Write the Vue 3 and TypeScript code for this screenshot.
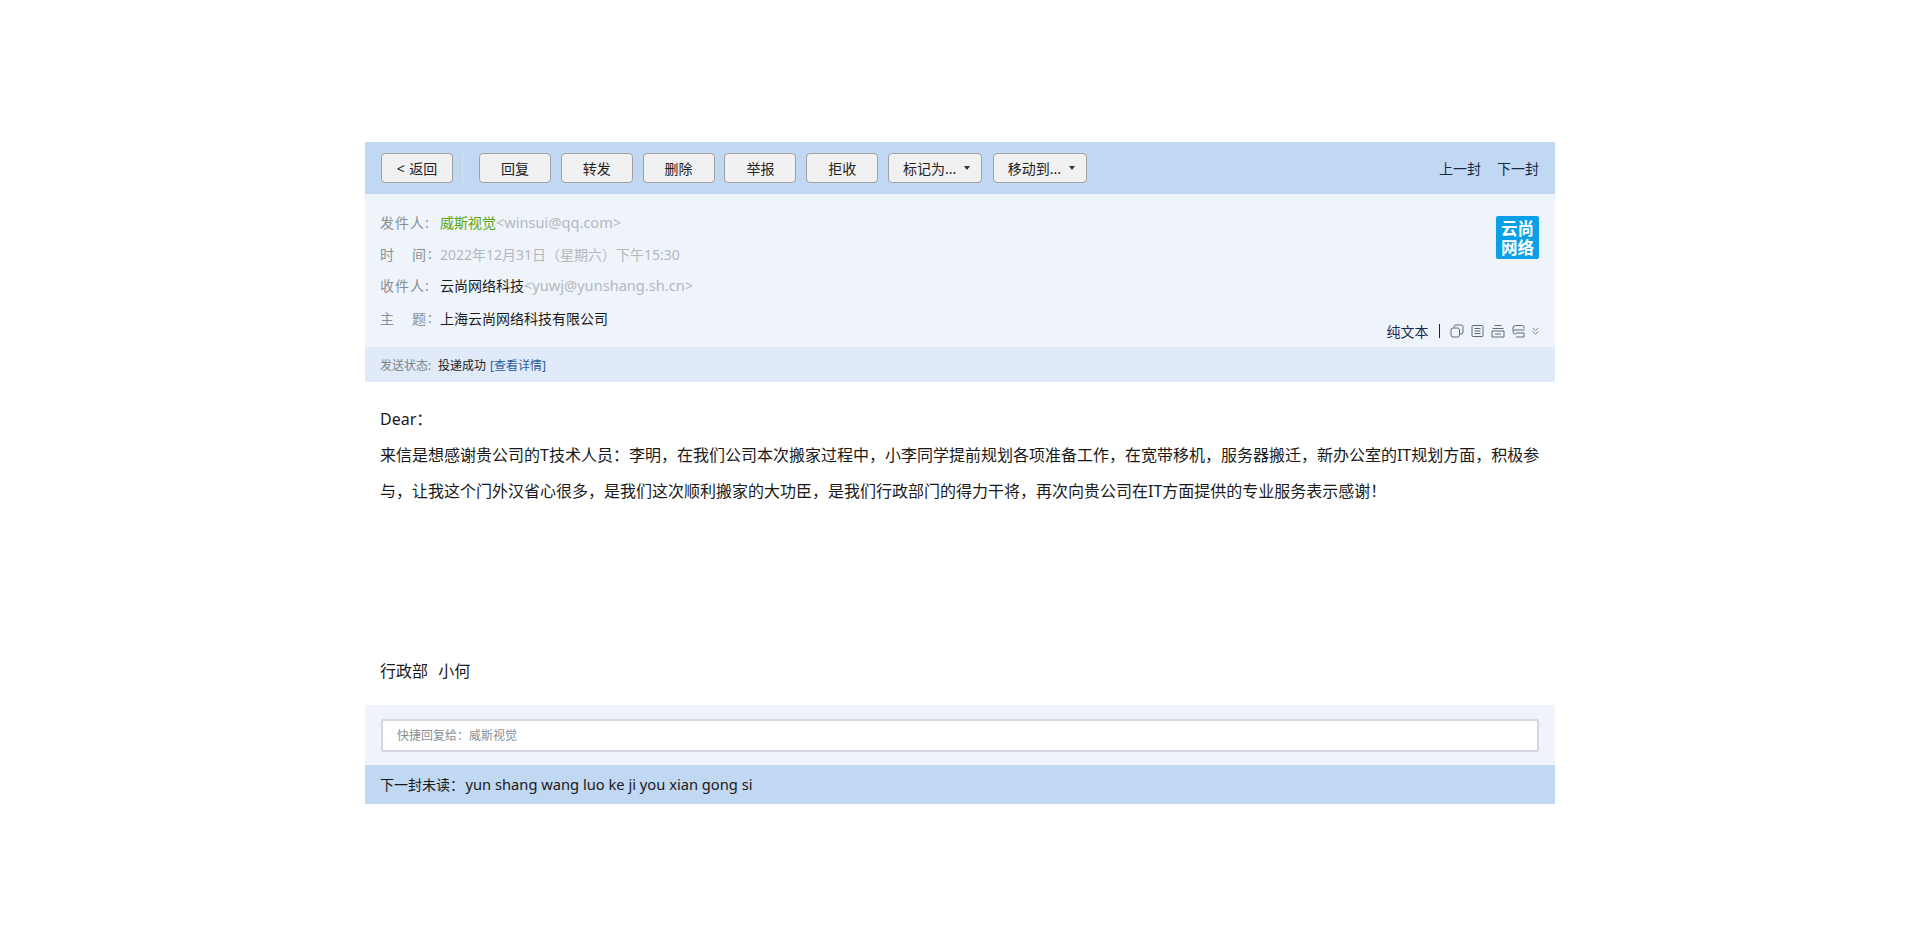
<template>
  <div class="page">
    <div class="mail">
      <div class="toolbar">
        <button class="btn">&lt; 返回</button>
        <span class="sep"></span>
        <div class="group">
          <button v-for="b in actions" :key="b" class="btn">{{ b }}</button>
          <button v-for="m in menus" :key="m" class="btn menu">
            {{ m }}<i class="caret"></i>
          </button>
        </div>
        <div class="pager">
          <a>上一封</a>
          <a>下一封</a>
        </div>
      </div>

      <div class="head">
        <div class="rows">
          <div class="row">
            <span class="label">发件人:</span>
            <span class="sender">威斯视觉</span><span class="addr latin">&lt;winsui@qq.com&gt;</span>
          </div>
          <div class="row">
            <span class="label spread"><b>时</b><b>间</b>:</span>
            <span class="addr">2022年12月31日（星期六）下午15:30</span>
          </div>
          <div class="row">
            <span class="label">收件人:</span>
            <span class="value">云尚网络科技</span><span class="addr latin">&lt;yuwj@yunshang.sh.cn&gt;</span>
          </div>
          <div class="row subject">
            <span class="label spread"><b>主</b><b>题</b>:</span>
            <span class="value">上海云尚网络科技有限公司</span>
          </div>
        </div>
        <div class="aside">
          <div class="logo">云尚<br />网络</div>
          <div class="tools">
            <span>纯文本</span>
            <i class="bar"></i>
            <svg width="14" height="14" viewBox="0 0 14 14" fill="none" stroke="#5f6b7a">
              <rect x="1" y="4" width="8.500" height="9" rx="2" />
              <path d="M4 3.500V3a2 2 0 0 1 2-2h5.500A1.500 1.500 0 0 1 13 2.500V8a2 2 0 0 1-2 2h-1" />
            </svg>
            <svg width="13" height="14" viewBox="0 0 13 14" fill="none" stroke="#5f6b7a">
              <rect x="1" y="1.500" width="11" height="11" rx="1" />
              <path d="M3.500 4.500h6M3.500 7h6M3.500 9.500h6" />
            </svg>
            <svg width="14" height="14" viewBox="0 0 14 14" fill="none" stroke="#5f6b7a">
              <path d="M3.500 1.500h7M1.500 4.500h11M1 7h12v6H1zM4 10h6" />
            </svg>
            <svg width="13" height="14" viewBox="0 0 13 14" fill="none" stroke="#5f6b7a">
              <path d="M12 4.500V3a1.500 1.500 0 0 0-1.500-1.500h-7A2.500 2.500 0 0 0 1 4v3.500A2.500 2.500 0 0 0 3.500 10H4M1.500 6h11M4 9h8v4H4" />
            </svg>
            <svg width="7" height="8" viewBox="0 0 7 8" fill="none" stroke="#7f8a97">
              <path d="M.5 1l3 2.500 3-2.500M.5 4.500l3 2.500 3-2.500" />
            </svg>
          </div>
        </div>
      </div>

      <div class="status">
        <span class="status-label">发送状态:</span>
        <span class="status-value">投递成功</span>
        <a class="detail">[查看详情]</a>
      </div>

      <div class="body">
        <p class="dear">Dear：</p>
        <p class="text">来信是想感谢贵公司的T技术人员：李明，在我们公司本次搬家过程中，小李同学提前规划各项准备工作，在宽带移机，服务器搬迁，新办公室的IT规划方面，积极参与，让我这个门外汉省心很多，是我们这次顺利搬家的大功臣，是我们行政部门的得力干将，再次向贵公司在IT方面提供的专业服务表示感谢！</p>
        <p class="sign">行政部&nbsp;&nbsp;小何</p>
      </div>

      <div class="reply">
        <div class="reply-box">快捷回复给：威斯视觉</div>
      </div>
      <div class="next">下一封未读：<span class="latin next-name">yun shang wang luo ke ji you xian gong si</span></div>
    </div>
  </div>
</template>

<script setup lang="ts">
const actions: string[] = ['回复', '转发', '删除', '举报', '拒收']
const menus: string[] = ['标记为...', '移动到...']
</script>

<style>
html,
body {
  margin: 0;
  background: #fff;
}
</style>

<style scoped>
.page {
  min-height: 944px;
  padding-top: 142px;
  box-sizing: border-box;
  font-family: "Noto Sans", "Noto Sans CJK SC", sans-serif;
  color: #000;
}

.mail {
  width: 1190px;
  margin: 0 auto;
}

.latin {
  font-size: 14.600px;
}

.toolbar {
  display: flex;
  align-items: center;
  height: 52px;
  padding: 0 16px;
  background: #c1d8f2;
}

.btn {
  width: 72px;
  height: 30px;
  padding: 0;
  border: 1px solid #a0a0a0;
  border-radius: 4px;
  background: #f1f1f1;
  font: inherit;
  font-size: 14px;
  word-spacing: 1px;
  color: #222;
}

.menu {
  width: 94px;
  padding-left: 14px;
  display: flex;
  align-items: center;
}

.menu + .menu {
  margin-left: 1px;
}

.caret {
  margin-left: 8px;
  border: 3px solid transparent;
  border-top: 4px solid #333;
  border-bottom: 0;
}

.sep {
  width: 1px;
  height: 30px;
  margin: 0 16px 0 9px;
  background: #d6e4f4;
}

.group {
  display: flex;
  gap: 9.800px;
}

.pager {
  display: flex;
  gap: 16px;
  margin-left: auto;
  font-size: 14px;
  color: #1a2a44;
}

.head {
  display: flex;
  justify-content: space-between;
  height: 153px;
  padding: 0 16px 0 15px;
  box-sizing: border-box;
  background: #eff4fb;
}

.rows {
  padding-top: 12.500px;
}

.row {
  display: flex;
  align-items: center;
  height: 31.500px;
  font-size: 14px;
}

.subject {
  margin-top: 1px;
}

.label {
  display: flex;
  width: 60px;
  letter-spacing: 1px;
  color: #8a8f96;
}

.spread b {
  width: 32px;
  font-weight: 400;
}

.spread b + b {
  width: 16px;
}

.sender {
  color: #5aa60c;
}

.addr {
  color: #b4b8bd;
}

.value {
  color: #1a1a1a;
}

.aside {
  display: flex;
  flex-direction: column;
  align-items: flex-end;
  justify-content: space-between;
  padding: 22px 0 7px;
}

.logo {
  width: 43px;
  height: 43px;
  border-radius: 2px;
  background: #0a9fe6;
  color: #fff;
  font-family: "Liberation Sans", "Noto Sans CJK SC", sans-serif;
  font-size: 16.500px;
  font-weight: 700;
  line-height: 19px;
  text-align: center;
  padding-top: 4px;
  box-sizing: border-box;
}

.tools {
  display: flex;
  align-items: center;
  gap: 7px;
  height: 18px;
  font-size: 14px;
  color: #1a2a55;
}

.bar {
  width: 1.500px;
  height: 14px;
  margin: 0 3px;
  background: #0f2050;
}

.status {
  display: flex;
  align-items: center;
  height: 35px;
  padding: 0 15px;
  background: #e0eaf8;
  font-size: 12px;
}

.status-label {
  width: 58px;
  color: #7c8289;
}

.status-value {
  margin-right: 4px;
  color: #1a1a1a;
}

.detail {
  color: #2a5aa0;
}

.body {
  height: 323px;
  padding: 19px 12px 0 15px;
  box-sizing: border-box;
  font-size: 16px;
  line-height: 36px;
  color: #1a1a1a;
}

.body p {
  margin: 0;
}

.sign {
  margin-top: 144px !important;
  word-spacing: 1px;
}

.reply {
  height: 60px;
  padding: 14px 16px 0;
  box-sizing: border-box;
  background: #eff4fb;
}

.reply-box {
  height: 33px;
  padding-left: 14px;
  box-sizing: border-box;
  border: 2px solid #d3d8e0;
  border-radius: 2px;
  background: #fff;
  font-size: 12px;
  line-height: 29px;
  color: #8a8f96;
}

.next {
  height: 39px;
  padding-left: 15px;
  background: #c1d8f2;
  font-size: 14px;
  line-height: 39px;
  color: #1a1a1a;
}

.next-name {
  margin-left: 1.500px;
  font-size: 14.700px;
}
</style>
